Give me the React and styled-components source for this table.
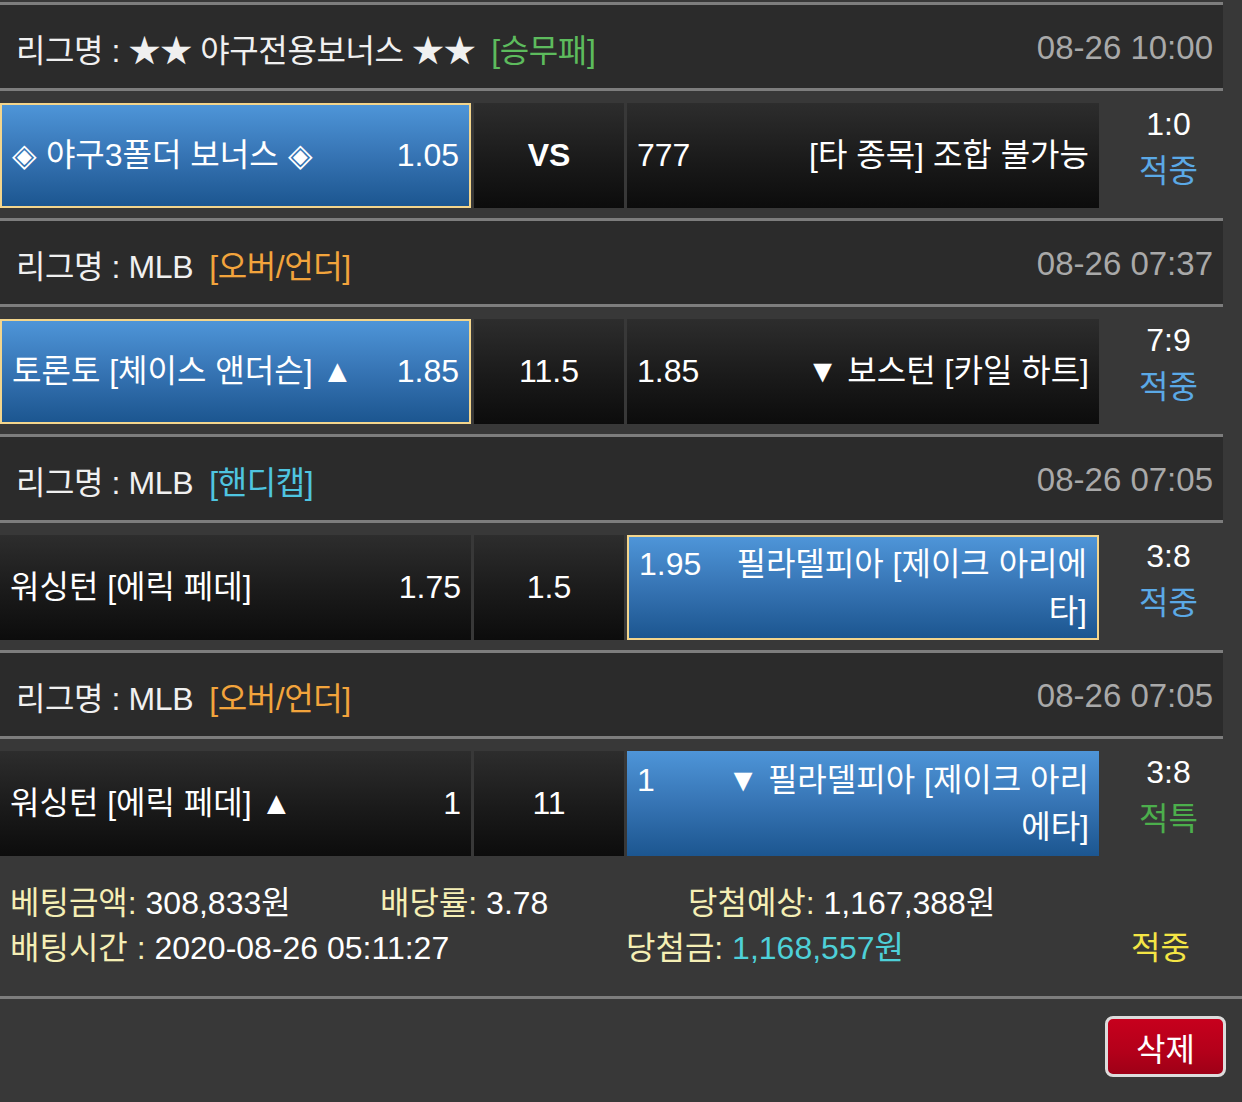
import React from 'react';
import styled, { createGlobalStyle } from 'styled-components';

const GlobalStyle = createGlobalStyle`
  html, body {
    margin: 0;
    padding: 0;
    background: #383838;
  }
  body {
    font-family: "Liberation Sans", "Noto Sans CJK KR", Arial, sans-serif;
    color: #f2f2f2;
  }
`;

const Page = styled.div`
  width: 1242px;
  min-height: 1102px;
  padding-top: 2px;
  box-sizing: border-box;
`;

const List = styled.div`
  width: 1223px;
`;

const Rule = styled.div`
  height: 3px;
  background: #7d7d7d;
`;

const LeagueHeader = styled.div`
  height: 83px;
  box-sizing: border-box;
  padding: 3px 10px 0 16px;
  display: flex;
  align-items: center;
  justify-content: space-between;
  background: #2b2b2b;
  font-size: 32px;
  white-space: nowrap;
`;

const LeagueName = styled.div`
  color: #f0f0f0;
  letter-spacing: -0.4px;
`;

const Tag = styled.span`
  margin-left: 16px;
  color: ${(p) => p.$color};
`;

const Kickoff = styled.div`
  color: #a9a9a9;
  font-size: 33px;
`;

const MatchRow = styled.div`
  display: grid;
  grid-template-columns: 471px 150px 472px 1fr;
  align-items: start;
  column-gap: 3px;
  padding: 12px 0 ${(p) => (p.$last ? '0' : '10px')};
`;

const Cell = styled.div`
  height: 105px;
  box-sizing: border-box;
  padding: 0 10px;
  display: flex;
  align-items: center;
  justify-content: ${(p) => (p.$center ? 'center' : 'stretch')};
  font-size: 32px;
  line-height: 47px;
  color: #fff;
  background: ${(p) =>
    p.$active
      ? 'linear-gradient(180deg, #4e95d8 0%, #3674b4 50%, #1c5690 100%)'
      : 'linear-gradient(180deg, #2d2d2d 0%, #1a1a1a 55%, #0c0c0c 100%)'};
  border: ${(p) => (p.$picked ? '2px solid #f3d58c' : 'none')};
`;

const CellBody = styled.div`
  width: 100%;
  display: flex;
  align-items: flex-start;
  justify-content: space-between;
`;

const Team = styled.div`
  text-align: ${(p) => (p.$right ? 'right' : 'left')};
  white-space: nowrap;
`;

const Odds = styled.div`
  white-space: nowrap;
`;

const Middle = styled.div`
  font-weight: ${(p) => (p.$bold ? 700 : 400)};
`;

const Result = styled.div`
  height: 105px;
  box-sizing: border-box;
  display: flex;
  flex-direction: column;
  align-items: center;
  justify-content: center;
  padding: 0 0 16px 12px;
  font-size: 32px;
  line-height: 47px;
  color: #fff;
`;

const Verdict = styled.div`
  color: ${(p) => p.$color};
`;

const Summary = styled.div`
  padding: 25px 10px 25px;
  font-size: 32px;
  line-height: 45px;
  white-space: nowrap;
`;

const SummaryLine = styled.div`
  display: grid;
  grid-template-columns: ${(p) => p.$cols};
`;

const Label = styled.span`
  color: #f5efb5;
`;

const Value = styled.span`
  color: ${(p) => p.$color || '#fff'};
`;

const Status = styled.span`
  color: #f4e545;
`;

const Footer = styled.div`
  display: flex;
  justify-content: flex-end;
  padding: 17px 16px 24px;
`;

const DeleteButton = styled.button`
  width: 121px;
  height: 61px;
  border: 3px solid #dcdcdc;
  border-radius: 8px;
  background: linear-gradient(180deg, #c7001d 0%, #b3001a 60%, #9e0017 100%);
  color: #fff;
  font-family: inherit;
  font-size: 32px;
  padding: 0;
  cursor: pointer;
`;

const games = [
  {
    league: '★★ 야구전용보너스 ★★',
    tag: '[승무패]',
    tagColor: '#5dbb5d',
    time: '08-26 10:00',
    home: { team: ['◈ 야구3폴더 보너스 ◈'], odds: '1.05' },
    mid: 'VS',
    away: { odds: '777', team: ['[타 종목] 조합 불가능'] },
    active: 'home',
    picked: 'home',
    score: '1:0',
    result: '적중',
    resultColor: '#5ba9e6',
  },
  {
    league: 'MLB',
    tag: '[오버/언더]',
    tagColor: '#f2a43c',
    time: '08-26 07:37',
    home: { team: ['토론토 [체이스 앤더슨] ▲'], odds: '1.85' },
    mid: '11.5',
    away: { odds: '1.85', team: ['▼ 보스턴 [카일 하트]'] },
    active: 'home',
    picked: 'home',
    score: '7:9',
    result: '적중',
    resultColor: '#5ba9e6',
  },
  {
    league: 'MLB',
    tag: '[핸디캡]',
    tagColor: '#4fc5e0',
    time: '08-26 07:05',
    home: { team: ['워싱턴 [에릭 페데]'], odds: '1.75' },
    mid: '1.5',
    away: { odds: '1.95', team: ['필라델피아 [제이크 아리에', '타]'] },
    active: 'away',
    picked: 'away',
    score: '3:8',
    result: '적중',
    resultColor: '#5ba9e6',
  },
  {
    league: 'MLB',
    tag: '[오버/언더]',
    tagColor: '#f2a43c',
    time: '08-26 07:05',
    home: { team: ['워싱턴 [에릭 페데] ▲'], odds: '1' },
    mid: '11',
    away: { odds: '1', team: ['▼ 필라델피아 [제이크 아리', '에타]'] },
    active: 'away',
    picked: null,
    score: '3:8',
    result: '적특',
    resultColor: '#4cae4c',
  },
];

const Lines = ({ lines }) =>
  lines.map((line, i) => (
    <React.Fragment key={i}>
      {i > 0 && <br />}
      {line}
    </React.Fragment>
  ));

const Game = ({ game, last }) => (
  <>
    <LeagueHeader>
      <LeagueName>
        리그명 : {game.league}
        <Tag $color={game.tagColor}>{game.tag}</Tag>
      </LeagueName>
      <Kickoff>{game.time}</Kickoff>
    </LeagueHeader>
    <Rule />
    <MatchRow $last={last}>
      <Cell $active={game.active === 'home'} $picked={game.picked === 'home'}>
        <CellBody>
          <Team>
            <Lines lines={game.home.team} />
          </Team>
          <Odds>{game.home.odds}</Odds>
        </CellBody>
      </Cell>
      <Cell $center>
        <Middle $bold={game.mid === 'VS'}>{game.mid}</Middle>
      </Cell>
      <Cell $active={game.active === 'away'} $picked={game.picked === 'away'}>
        <CellBody>
          <Odds>{game.away.odds}</Odds>
          <Team $right>
            <Lines lines={game.away.team} />
          </Team>
        </CellBody>
      </Cell>
      <Result>
        <div>{game.score}</div>
        <Verdict $color={game.resultColor}>{game.result}</Verdict>
      </Result>
    </MatchRow>
    {!last && <Rule />}
  </>
);

export default function App() {
  return (
    <Page>
      <GlobalStyle />
      <List>
        <Rule />
        {games.map((g, i) => (
          <Game key={i} game={g} last={i === games.length - 1} />
        ))}
      </List>
      <Summary>
        <SummaryLine $cols="370px 308px auto">
          <span>
            <Label>베팅금액:</Label> <Value>308,833원</Value>
          </span>
          <span>
            <Label>배당률:</Label> <Value>3.78</Value>
          </span>
          <span>
            <Label>당첨예상:</Label> <Value>1,167,388원</Value>
          </span>
        </SummaryLine>
        <SummaryLine $cols="616px 505px auto">
          <span>
            <Label>배팅시간 :</Label> <Value>2020-08-26 05:11:27</Value>
          </span>
          <span>
            <Label>당첨금:</Label> <Value $color="#4ed0d8">1,168,557원</Value>
          </span>
          <Status>적중</Status>
        </SummaryLine>
      </Summary>
      <Rule />
      <Footer>
        <DeleteButton type="button">삭제</DeleteButton>
      </Footer>
    </Page>
  );
}
